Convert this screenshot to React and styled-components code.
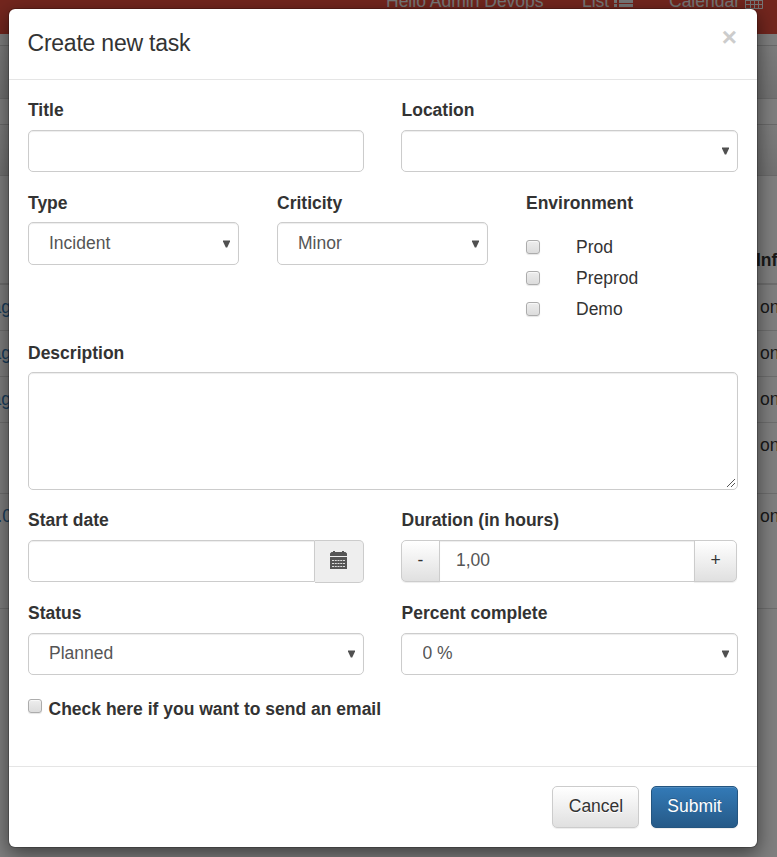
import React from 'react';
import styled, { createGlobalStyle } from 'styled-components';

const Global = createGlobalStyle`
  *, *::before, *::after { box-sizing: border-box; }
  html, body, #root { height: 100%; }
  body {
    margin: 0;
    overflow: hidden;
    background: #fff;
    color: #333;
    font: 17.5px/25px "Liberation Sans", Arial, sans-serif;
  }
  input, select, button, textarea { font: inherit; margin: 0; }
`;

const Page = styled.div`
  position: relative;
  width: 777px;
  height: 857px;
  overflow: hidden;
`;

const Backdrop = styled.div`
  position: absolute;
  inset: 0;
  background: rgba(0, 0, 0, 0.5);
`;

const Navbar = styled.nav`
  height: 34px;
  background: #e74c3c;
  color: #eee;
  display: flex;
  padding-left: 386px;
`;

const NavItem = styled.span`
  display: flex;
  gap: 4.5px;
  flex: none;
  width: ${(p) => p.$width}px;
  height: 25px;
  margin-top: -11.5px;
  white-space: nowrap;
  svg { flex: none; margin-top: ${(p) => p.$drop || 0}px; }
`;

const Strip = styled.div`
  height: ${(p) => p.$height}px;
  border-top: 1px solid #d4d4d4;
  border-bottom: 1px solid #d4d4d4;
  background: linear-gradient(#fafafa, #e4e4e4);
`;

const Spacer = styled.div`
  height: ${(p) => p.$height}px;
`;

const TableRow = styled.div`
  display: flex;
  justify-content: space-between;
  height: ${(p) => p.$height}px;
  padding-top: 10px;
  border-top: ${(p) => (p.$first ? 0 : 1)}px solid #ddd;
`;

const TableHead = styled(TableRow)`
  padding-top: 12px;
  border-top: 0;
  border-bottom: 2px solid #ddd;
  font-weight: bold;
`;

const LinkCell = styled.span`
  width: ${(p) => p.$width}px;
  display: flex;
  justify-content: flex-end;
  color: #337ab7;
  white-space: nowrap;
`;

const TextCell = styled.span`
  width: ${(p) => p.$width || 17}px;
  white-space: nowrap;
`;

const Dialog = styled.section`
  position: absolute;
  left: 8px;
  top: 8px;
  width: 750px;
  height: 840px;
  display: flex;
  flex-direction: column;
  border: 1px solid rgba(0, 0, 0, 0.2);
  border-radius: 7px;
  background: #fff;
  background-clip: padding-box;
  box-shadow: 0 6px 19px rgba(0, 0, 0, 0.5);
`;

const Header = styled.header`
  display: flex;
  justify-content: space-between;
  height: 71px;
  padding: 18px 20px 0 18.5px;
  border-bottom: 1px solid #e5e5e5;
`;

const Heading = styled.h4`
  margin: 0;
  font-size: 23px;
  font-weight: normal;
  line-height: 32px;
  letter-spacing: -0.23px;
`;

const Close = styled.button`
  align-self: flex-start;
  padding: 0;
  border: 0;
  background: none;
  color: #ccc;
  font-size: 26px;
  font-weight: bold;
  line-height: 20px;
  height: 20px;
`;

const Body = styled.form`
  display: grid;
  grid-template-rows: 93px 150px 167px 93px 96px;
  flex: 1;
  padding: 18px 19px 0;
`;

const Halves = styled.div`
  display: grid;
  grid-template-columns: 336px 337px;
  column-gap: 37px;
`;

const Thirds = styled.div`
  display: grid;
  grid-template-columns: 211px 211px 211px;
  column-gap: 38px;
`;

const Field = styled.div`
  display: flex;
  flex-direction: column;
`;

const Label = styled.label`
  height: 25px;
  margin-bottom: ${(p) => (p.$tight ? 6 : 7)}px;
  padding-left: ${(p) => (p.$inset ? 0.5 : 0)}px;
  font-weight: bold;
  white-space: nowrap;
`;

const Input = styled.input`
  flex: 1;
  width: 100%;
  min-width: 0;
  min-height: 42px;
  max-height: 42px;
  padding: 0 16px 2px;
  border: 1px solid #ccc;
  border-radius: ${(p) => p.$radius || '5px'};
  background: #fff;
  color: #555;
  box-shadow: inset 0 1px 1px rgba(0, 0, 0, 0.075);
  outline: none;
`;

const SelectBox = styled.div`
  display: grid;
  height: ${(p) => p.$height || 42}px;
  > * { grid-area: 1 / 1; }
  svg { justify-self: end; align-self: center; margin-right: 9px; pointer-events: none; }
`;

const NativeSelect = styled.select`
  appearance: none;
  width: 100%;
  height: 100%;
  padding: 0 20px ${(p) => (p.$tall ? 1 : 2)}px ${(p) => (p.$inset ? 20.5 : 20)}px;
  border: 1px solid #ccc;
  border-radius: 5px;
  background: #fff;
  color: #555;
  box-shadow: inset 0 1px 1px rgba(0, 0, 0, 0.075);
`;

const TextAreaBox = styled.div`
  display: grid;
  > * { grid-area: 1 / 1; }
  svg { place-self: end; margin: 0 2px 2px 0; pointer-events: none; }
`;

const TextArea = styled.textarea`
  width: 100%;
  height: 118px;
  padding: 7px 15px;
  border: 1px solid #ccc;
  border-radius: 5px;
  box-shadow: inset 0 1px 1px rgba(0, 0, 0, 0.075);
  resize: none;
`;

const Checkbox = styled.input.attrs({ type: 'checkbox' })`
  appearance: none;
  flex: none;
  width: 14px;
  height: 14px;
  border: 1px solid #acacac;
  border-radius: 3px;
  background: linear-gradient(#ededed, #dcdcdc);
  box-shadow: inset 0 1px 1px rgba(255, 255, 255, 0.7), 0 1px 1px rgba(0, 0, 0, 0.1);
`;

const Options = styled.div`
  display: flex;
  flex-direction: column;
  gap: 6px;
  padding-top: 13px;
`;

const Option = styled.label`
  display: flex;
  gap: 36px;
  height: 25px;
  input { margin-top: 5px; }
`;

const MailOption = styled.label`
  display: flex;
  gap: 6.5px;
  height: 25px;
  font-weight: bold;
  white-space: nowrap;
  input { margin-top: 2px; }
`;

const Group = styled.div`
  display: flex;
  align-items: flex-start;
`;

const Stepper = styled(Group)`
  width: 336px;
  input { margin: 0 -1px; padding-left: 16px; }
`;

const Addon = styled.button`
  display: flex;
  align-items: center;
  justify-content: center;
  width: 49px;
  height: 43px;
  padding: 0 1px 3px 0;
  border: 1px solid #ccc;
  border-left: 0;
  border-radius: 0 5px 5px 0;
  background: #eee;
  color: #555;
`;

const Button = styled.button`
  flex: none;
  width: ${(p) => p.$width}px;
  height: 42px;
  padding: 0 0 2px ${(p) => p.$nudge || 0}px;
  border: 1px solid ${(p) => (p.$primary ? '#245580' : '#ccc')};
  border-radius: ${(p) => p.$radius || '5px'};
  background: ${(p) => (p.$primary ? 'linear-gradient(#337ab7, #265a88)' : 'linear-gradient(#fff, #e0e0e0)')};
  color: ${(p) => (p.$primary ? '#fff' : '#333')};
  text-shadow: ${(p) => (p.$primary ? '0 -1px 0 rgba(0,0,0,.2)' : '0 1px 0 #fff')};
  box-shadow: inset 0 1px 0 rgba(255, 255, 255, 0.15), 0 1px 1px rgba(0, 0, 0, 0.075);
`;

const Footer = styled.footer`
  display: flex;
  justify-content: flex-end;
  gap: 12px;
  height: 81px;
  padding: 19px 19px 0;
  border-top: 1px solid #e5e5e5;
`;

const Arrow = () => (
  <svg width="7" height="8" viewBox="0 0 7 8"><path d="M0 .5h7v1L4.2 7.5H2.8L0 1.5z" fill="#505050" /></svg>
);

const Grip = () => (
  <svg width="10" height="10" viewBox="0 0 10 10" stroke="#555">
    <path d="M1 9l8-8M5 9l4-4" />
  </svg>
);

const CalendarIcon = () => (
  <svg width="17" height="18" viewBox="0 0 17 18">
    <path d="M0 5V2.5L1.5 1H3V0h2v1h7V0h2v1h1.5L17 2.5V5zM0 6h17v12H0z" fill="#555" />
    <path d="M2 9.5h13M2 12.5h13M2 15.5h13" stroke="#ddd" strokeDasharray="2 .75" />
  </svg>
);

const ListIcon = () => (
  <svg width="19" height="18" viewBox="0 0 19 18" fill="currentColor">
    <path d="M0 1h3v3H0zM5 1h14v3H5zM0 6h3v3H0zM5 6h14v3H5zM0 10h3v3H0zM5 10h14v3H5zM0 14h3v3H0zM5 14h14v3H5z" />
  </svg>
);

const NavCalendarIcon = () => (
  <svg width="18" height="19" viewBox="0 0 18 19" fill="none" stroke="currentColor">
    <path d="M.5 3.5h17v15H.5zM1 6.5h16M1 10.5h16M1 14.5h16M5.5 7v12M9.5 7v12M13.5 7v12" />
  </svg>
);

const Select = ({ value, height, inset }) => (
  <SelectBox $height={height}>
    <NativeSelect defaultValue={value} $tall={height > 42} $inset={inset}><option>{value}</option></NativeSelect>
    <Arrow />
  </SelectBox>
);

const rows = [
  { height: 45, link: 'Stag', text: 'on', width: 11 },
  { height: 46, link: 'Stag', text: 'on', width: 11 },
  { height: 46, link: 'Stag', text: 'on', width: 11 },
  { height: 71, link: '', text: 'on' },
  { height: 115, link: '1.0', text: 'on', width: 12 },
  { height: 260, link: '', text: '' },
];

export default function App() {
  return (
    <Page>
      <Global />
      <Navbar>
        <NavItem $width={196}>Hello Admin Devops</NavItem>
        <NavItem $width={87} $drop={1.5}>List <ListIcon /></NavItem>
        <NavItem $width={110} $drop={1.5}>Calendar <NavCalendarIcon /></NavItem>
      </Navbar>
      <Spacer $height={11} />
      <Strip $height={54} />
      <Spacer $height={25} />
      <Strip $height={52} />
      <Spacer $height={60} />
      <TableHead $height={49}><span /><TextCell $width={21}>Info</TextCell></TableHead>
      {rows.map((r, i) => (
        <TableRow key={i} $height={r.height} $first={i === 0}>
          <LinkCell $width={r.width || 9}>{r.link}</LinkCell>
          <TextCell>{r.text}</TextCell>
        </TableRow>
      ))}
      <Backdrop />
      <Dialog role="dialog">
        <Header>
          <Heading>Create new task</Heading>
          <Close aria-label="Close">×</Close>
        </Header>
        <Body>
          <Halves>
            <Field><Label>Title</Label><Input /></Field>
            <Field><Label $inset>Location</Label><Select value="" /></Field>
          </Halves>
          <Thirds>
            <Field><Label $tight>Type</Label><Select value="Incident" height={43} /></Field>
            <Field><Label $tight>Criticity</Label><Select value="Minor" height={43} /></Field>
            <Field>
              <Label $tight>Environment</Label>
              <Options>
                {['Prod', 'Preprod', 'Demo'].map((name) => (
                  <Option key={name}><Checkbox />{name}</Option>
                ))}
              </Options>
            </Field>
          </Thirds>
          <Field>
            <Label $tight>Description</Label>
            <TextAreaBox><TextArea /><Grip /></TextAreaBox>
          </Field>
          <Halves>
            <Field>
              <Label>Start date</Label>
              <Group>
                <Input $radius="5px 0 0 5px" />
                <Addon type="button"><CalendarIcon /></Addon>
              </Group>
            </Field>
            <Field>
              <Label $inset>Duration (in hours)</Label>
              <Stepper>
                <Button type="button" $width={39} $radius="5px 0 0 5px">-</Button>
                <Input $radius="0" defaultValue="1,00" />
                <Button type="button" $width={43} $radius="0 5px 5px 0">+</Button>
              </Stepper>
            </Field>
          </Halves>
          <Halves>
            <Field><Label>Status</Label><Select value="Planned" /></Field>
            <Field><Label $inset>Percent complete</Label><Select value="0 %" inset /></Field>
          </Halves>
          <MailOption><Checkbox />Check here if you want to send an email</MailOption>
        </Body>
        <Footer>
          <Button $width={87} $nudge={1}>Cancel</Button>
          <Button $width={87} $primary>Submit</Button>
        </Footer>
      </Dialog>
    </Page>
  );
}
